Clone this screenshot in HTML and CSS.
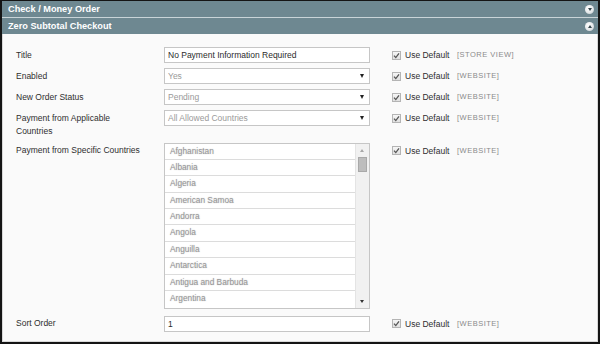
FILE: index.html
```html
<!DOCTYPE html>
<html lang="en">
<head>
  <meta charset="UTF-8" />
  <title>Payment Methods</title>
  <link rel="stylesheet" href="styles.css">
</head>
<body>
  <div class="frame">
    <!-- Collapsed section -->
    <div class="section-head">
      <span>Check / Money Order</span>
      <span class="toggle"><span class="tri down"></span></span>
    </div>
    <!-- Open section -->
    <div class="section-head">
      <span>Zero Subtotal Checkout</span>
      <span class="toggle"><span class="tri up"></span></span>
    </div>

    <div class="fieldset">
      <div class="row">
        <div class="label">Title</div>
        <div class="value"><div class="input">No Payment Information Required</div></div>
        <div class="use-default"><span class="check"><svg viewBox="0 0 9 9" width="9" height="9"><path d="M2 4.6 L3.8 6.6 L7 2.4" fill="none" stroke="#555" stroke-width="1.3"/></svg></span>Use Default</div>
        <div class="scope">[STORE VIEW]</div>
      </div>
      <div class="row">
        <div class="label">Enabled</div>
        <div class="value"><div class="select">Yes<span class="arrow"></span></div></div>
        <div class="use-default"><span class="check"><svg viewBox="0 0 9 9" width="9" height="9"><path d="M2 4.6 L3.8 6.6 L7 2.4" fill="none" stroke="#555" stroke-width="1.3"/></svg></span>Use Default</div>
        <div class="scope">[WEBSITE]</div>
      </div>
      <div class="row">
        <div class="label">New Order Status</div>
        <div class="value"><div class="select">Pending<span class="arrow"></span></div></div>
        <div class="use-default"><span class="check"><svg viewBox="0 0 9 9" width="9" height="9"><path d="M2 4.6 L3.8 6.6 L7 2.4" fill="none" stroke="#555" stroke-width="1.3"/></svg></span>Use Default</div>
        <div class="scope">[WEBSITE]</div>
      </div>
      <div class="row">
        <div class="label">Payment from Applicable<br>Countries</div>
        <div class="value"><div class="select">All Allowed Countries<span class="arrow"></span></div></div>
        <div class="use-default"><span class="check"><svg viewBox="0 0 9 9" width="9" height="9"><path d="M2 4.6 L3.8 6.6 L7 2.4" fill="none" stroke="#555" stroke-width="1.3"/></svg></span>Use Default</div>
        <div class="scope">[WEBSITE]</div>
      </div>
      <div class="row tall">
        <div class="label">Payment from Specific Countries</div>
        <div class="value">
          <div class="listbox">
            <ul class="options">
              <li>Afghanistan</li>
              <li>Albania</li>
              <li>Algeria</li>
              <li>American Samoa</li>
              <li>Andorra</li>
              <li>Angola</li>
              <li>Anguilla</li>
              <li>Antarctica</li>
              <li>Antigua and Barbuda</li>
              <li>Argentina</li>
            </ul>
            <div class="scrollbar">
              <span class="sb-up"></span>
              <span class="sb-thumb"></span>
              <span class="sb-down"></span>
            </div>
          </div>
        </div>
        <div class="use-default"><span class="check"><svg viewBox="0 0 9 9" width="9" height="9"><path d="M2 4.6 L3.8 6.6 L7 2.4" fill="none" stroke="#555" stroke-width="1.3"/></svg></span>Use Default</div>
        <div class="scope">[WEBSITE]</div>
      </div>
      <div class="row">
        <div class="label">Sort Order</div>
        <div class="value"><div class="input">1</div></div>
        <div class="use-default"><span class="check"><svg viewBox="0 0 9 9" width="9" height="9"><path d="M2 4.6 L3.8 6.6 L7 2.4" fill="none" stroke="#555" stroke-width="1.3"/></svg></span>Use Default</div>
        <div class="scope">[WEBSITE]</div>
      </div>
    </div>
  </div>
</body>
</html>
```

FILE: styles.css
```css
/* Page frame */
body {
  margin: 0;
  font-family: 'Liberation Sans', Arial, sans-serif;
  font-size: 8.5px;
  color: #333;
  background: #fff;
}
.frame {
  width: 600px;
  height: 344px;
  box-sizing: border-box;
  border: 2px solid #141414;
  border-top-width: 1px;
  background: #fafafa;
  display: flex;
  flex-direction: column;
}
/* Section headers */
.section-head {
  height: 16px;
  background: #6e8891;
  color: #fff;
  font-weight: bold;
  font-size: 9.2px;
  display: flex;
  align-items: center;
  justify-content: space-between;
  padding: 0 4px 0 6px;
  border-bottom: 1px solid #c9d4d8;
}
.section-head + .section-head {
  border-bottom: none;
}
.toggle {
  width: 9px;
  height: 9px;
  border-radius: 50%;
  background: radial-gradient(circle at 40% 35%, #ffffff 0%, #e4e8ea 55%, #b9c3c7 100%);
  display: flex;
  align-items: center;
  justify-content: center;
}
.tri {
  width: 0;
  height: 0;
  border-left: 2.5px solid transparent;
  border-right: 2.5px solid transparent;
}
.tri.down { border-top: 3px solid #35454b; }
.tri.up { border-bottom: 3px solid #35454b; }
/* Form area */
.fieldset {
  flex: 1;
  border: 1px solid #d8d8d8;
  border-top: none;
  padding: 13px 0 0 13px;
}
.row {
  display: grid;
  grid-template-columns: 148px 206px 22px 64px auto;
  grid-template-areas: "label value gap use scope";
  margin-bottom: 5px;
  align-items: start;
}
.row.tall {
  margin-bottom: 7px;
}
.label {
  grid-area: label;
  line-height: 13px;
  padding-top: 1.5px;
  color: #2e2e2e;
}
.value {
  grid-area: value;
}
.input, .select {
  height: 16px;
  box-sizing: border-box;
  border: 1px solid #c6c6c6;
  background: #fff;
  line-height: 14px;
  padding: 0 3px;
  position: relative;
}
.input {
  color: #2b2b2b;
}
.select {
  color: #9a9a9a;
}
.select .arrow {
  position: absolute;
  right: 5px;
  top: 5px;
  border-left: 2.5px solid transparent;
  border-right: 2.5px solid transparent;
  border-top: 4px solid #222;
}
/* Multi select list */
.listbox {
  height: 166px;
  box-sizing: border-box;
  border: 1px solid #c6c6c6;
  background: #fff;
  display: flex;
}
.options {
  list-style: none;
  margin: 0;
  padding: 0;
  flex: 1;
}
.options li {
  height: 16.4px;
  box-sizing: border-box;
  border-bottom: 1px solid #dcdcdc;
  line-height: 15px;
  padding-left: 5px;
  color: #969696;
  font-size: 8.3px;
  text-shadow: 0 0 1.5px #c8c8c8;
}
.options li:last-child {
  border-bottom: none;
}
.scrollbar {
  width: 13px;
  background: #f1f1f1;
  border-left: 1px solid #e4e4e4;
  position: relative;
}
.sb-up, .sb-down {
  position: absolute;
  left: 4px;
  border-left: 2.5px solid transparent;
  border-right: 2.5px solid transparent;
}
.sb-up {
  top: 5px;
  border-bottom: 3px solid #a8a8a8;
}
.sb-down {
  bottom: 5px;
  border-top: 3px solid #333;
}
.sb-thumb {
  position: absolute;
  left: 2px;
  top: 13px;
  width: 9px;
  height: 15px;
  background: #bdbdbd;
  border: 1px solid #a9a9a9;
  box-sizing: border-box;
}
/* Use default + scope */
.use-default {
  grid-area: use;
  display: flex;
  align-items: center;
  gap: 4px;
  height: 16px;
  color: #2e2e2e;
  white-space: nowrap;
}
.check {
  width: 9px;
  height: 9px;
  box-sizing: border-box;
  border: 1px solid #b4b4b4;
  background: linear-gradient(#f6f6f6, #e0e0e0);
  display: flex;
}
.check svg {
  margin: -1px;
}
.scope {
  grid-area: scope;
  height: 16px;
  line-height: 15px;
  font-size: 7.5px;
  letter-spacing: 0.5px;
  color: #8b8b8b;
  padding-left: 1px;
}
```
